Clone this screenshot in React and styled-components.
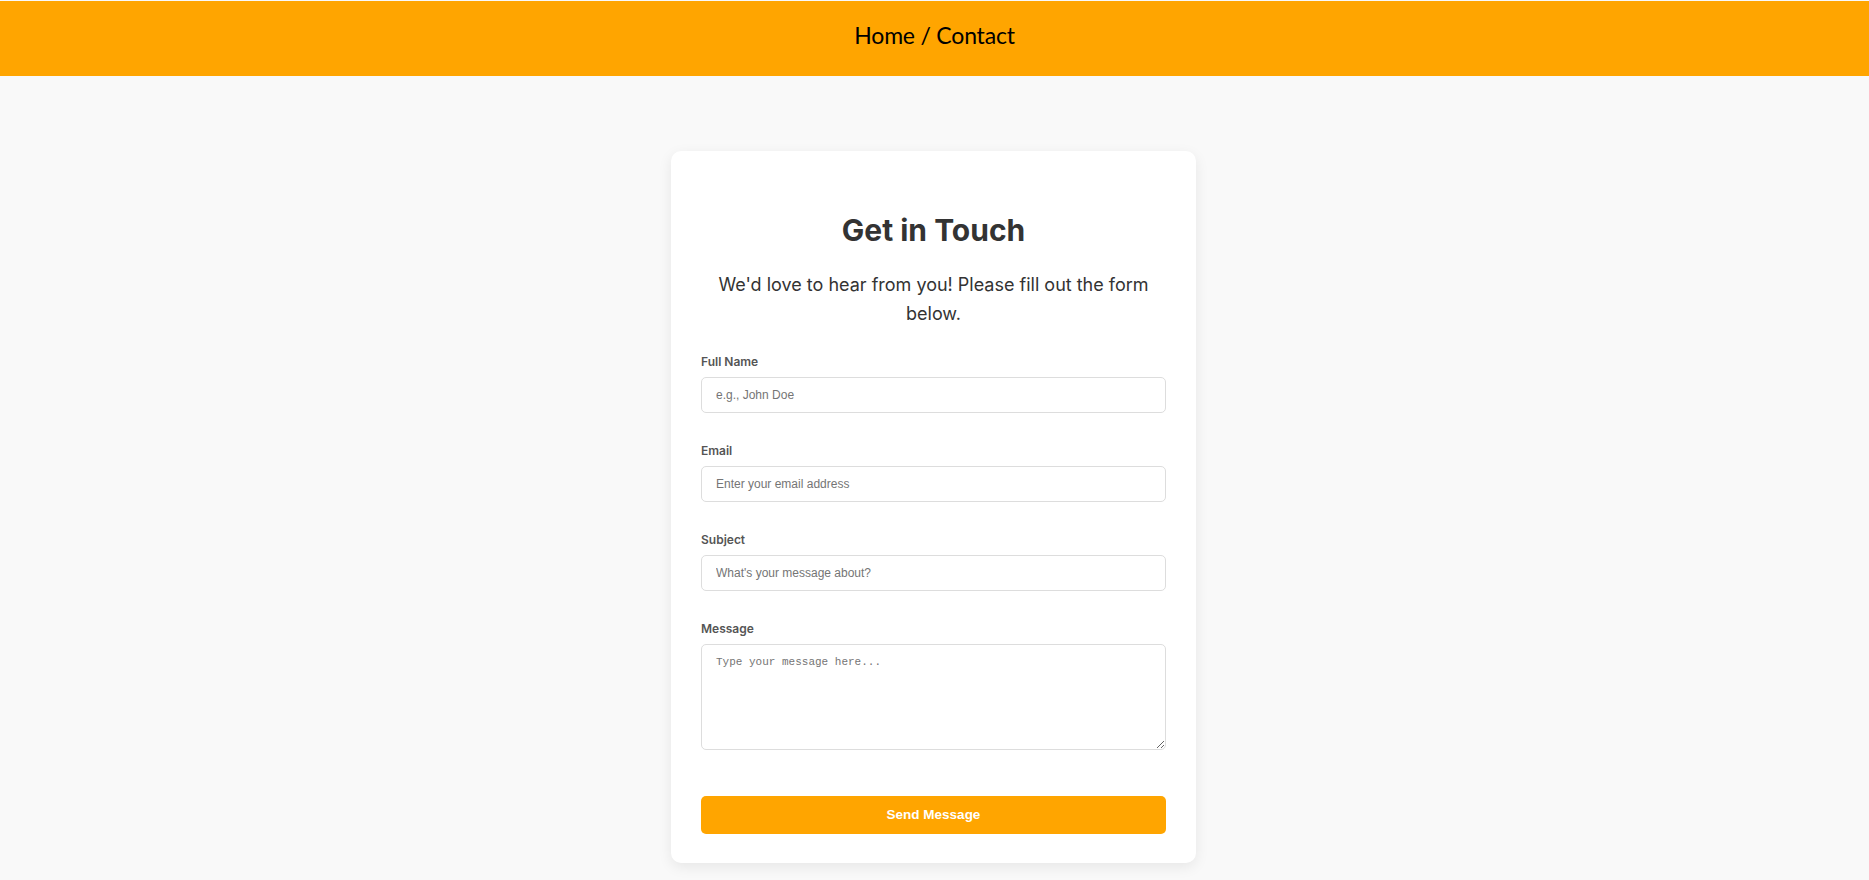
import React from "react";
import styled, { createGlobalStyle } from "styled-components";

const GlobalStyle = createGlobalStyle`
  html, body {
    margin: 0;
    padding: 0;
    background: #f9f9f9;
  }
  body {
    font-family: Inter, "Noto Sans", Arial, sans-serif;
    color: #333;
  }
  * { box-sizing: border-box; }
`;

const Page = styled.div`
  min-height: 880px;
  padding-top: 1px;
  background: #f9f9f9;
`;

const Header = styled.header`
  height: 75px;
  background: #ffa500;
  display: flex;
  align-items: center;
  justify-content: center;
  padding-bottom: 8px;
`;

const Breadcrumb = styled.h1`
  margin: 0;
  font-family: Lato, "Open Sans", sans-serif;
  font-weight: 400;
  font-size: 23px;
  line-height: 28px;
  color: #000;
  letter-spacing: -0.2px;
`;

const Main = styled.main`
  display: flex;
  justify-content: center;
  padding: 75px 22px 17px 20px;
`;

const Card = styled.section`
  width: 525px;
  background: #fff;
  border-radius: 10px;
  box-shadow: 0 4px 14px rgba(0, 0, 0, 0.08);
  padding: 30px 30px 29px;
`;

const Title = styled.h2`
  margin: 31px 0 23px;
  font-size: 30px;
  line-height: 36px;
  font-weight: 700;
  color: #333;
  text-align: center;
`;

const Intro = styled.p`
  margin: 0 0 25.4px;
  font-size: 18px;
  line-height: 28.8px;
  color: #333;
  text-align: center;
`;

const Form = styled.form`
  display: flex;
  flex-direction: column;
`;

const Field = styled.div`
  display: flex;
  flex-direction: column;
  margin-bottom: ${(p) => (p.$last ? "46px" : "30px")};
`;

const Label = styled.label`
  display: block;
  font-size: 12px;
  line-height: 15px;
  font-weight: 600;
  color: #555;
  margin-bottom: 8px;
`;

const Input = styled.input`
  width: 100%;
  height: 36px;
  padding: 0 14px;
  border: 1px solid #ddd;
  border-radius: 5px;
  font-family: "Liberation Sans", Arial, sans-serif;
  font-size: 12px;
  color: #333;
  background: #fff;
  outline: none;
  &::placeholder { color: #757575; }
`;

const TextArea = styled.textarea`
  display: block;
  width: 100%;
  height: 106px;
  padding: 11px 14px;
  border: 1px solid #ddd;
  border-radius: 5px;
  font-family: "Liberation Mono", monospace;
  font-size: 11px;
  color: #333;
  background: #fff;
  outline: none;
  &::placeholder { color: #757575; }
`;

const Button = styled.button`
  width: 100%;
  height: 38px;
  border: none;
  border-radius: 5px;
  background: #ffa500;
  color: #fff;
  font-family: "Liberation Sans", Arial, sans-serif;
  font-size: 13.5px;
  font-weight: 700;
  cursor: pointer;
`;

const fields = [
  { id: "name", label: "Full Name", type: "text", placeholder: "e.g., John Doe" },
  { id: "email", label: "Email", type: "email", placeholder: "Enter your email address" },
  { id: "subject", label: "Subject", type: "text", placeholder: "What's your message about?" },
];

export default function App() {
  return (
    <Page>
      <GlobalStyle />
      <Header>
        <Breadcrumb>Home / Contact</Breadcrumb>
      </Header>
      <Main>
        <Card>
          <Title>Get in Touch</Title>
          <Intro>We'd love to hear from you! Please fill out the form below.</Intro>
          <Form onSubmit={(e) => e.preventDefault()}>
            {fields.map((f) => (
              <Field key={f.id}>
                <Label htmlFor={f.id}>{f.label}</Label>
                <Input id={f.id} type={f.type} placeholder={f.placeholder} />
              </Field>
            ))}
            <Field $last>
              <Label htmlFor="message">Message</Label>
              <TextArea id="message" placeholder="Type your message here..." />
            </Field>
            <Button type="submit">Send Message</Button>
          </Form>
        </Card>
      </Main>
    </Page>
  );
}
